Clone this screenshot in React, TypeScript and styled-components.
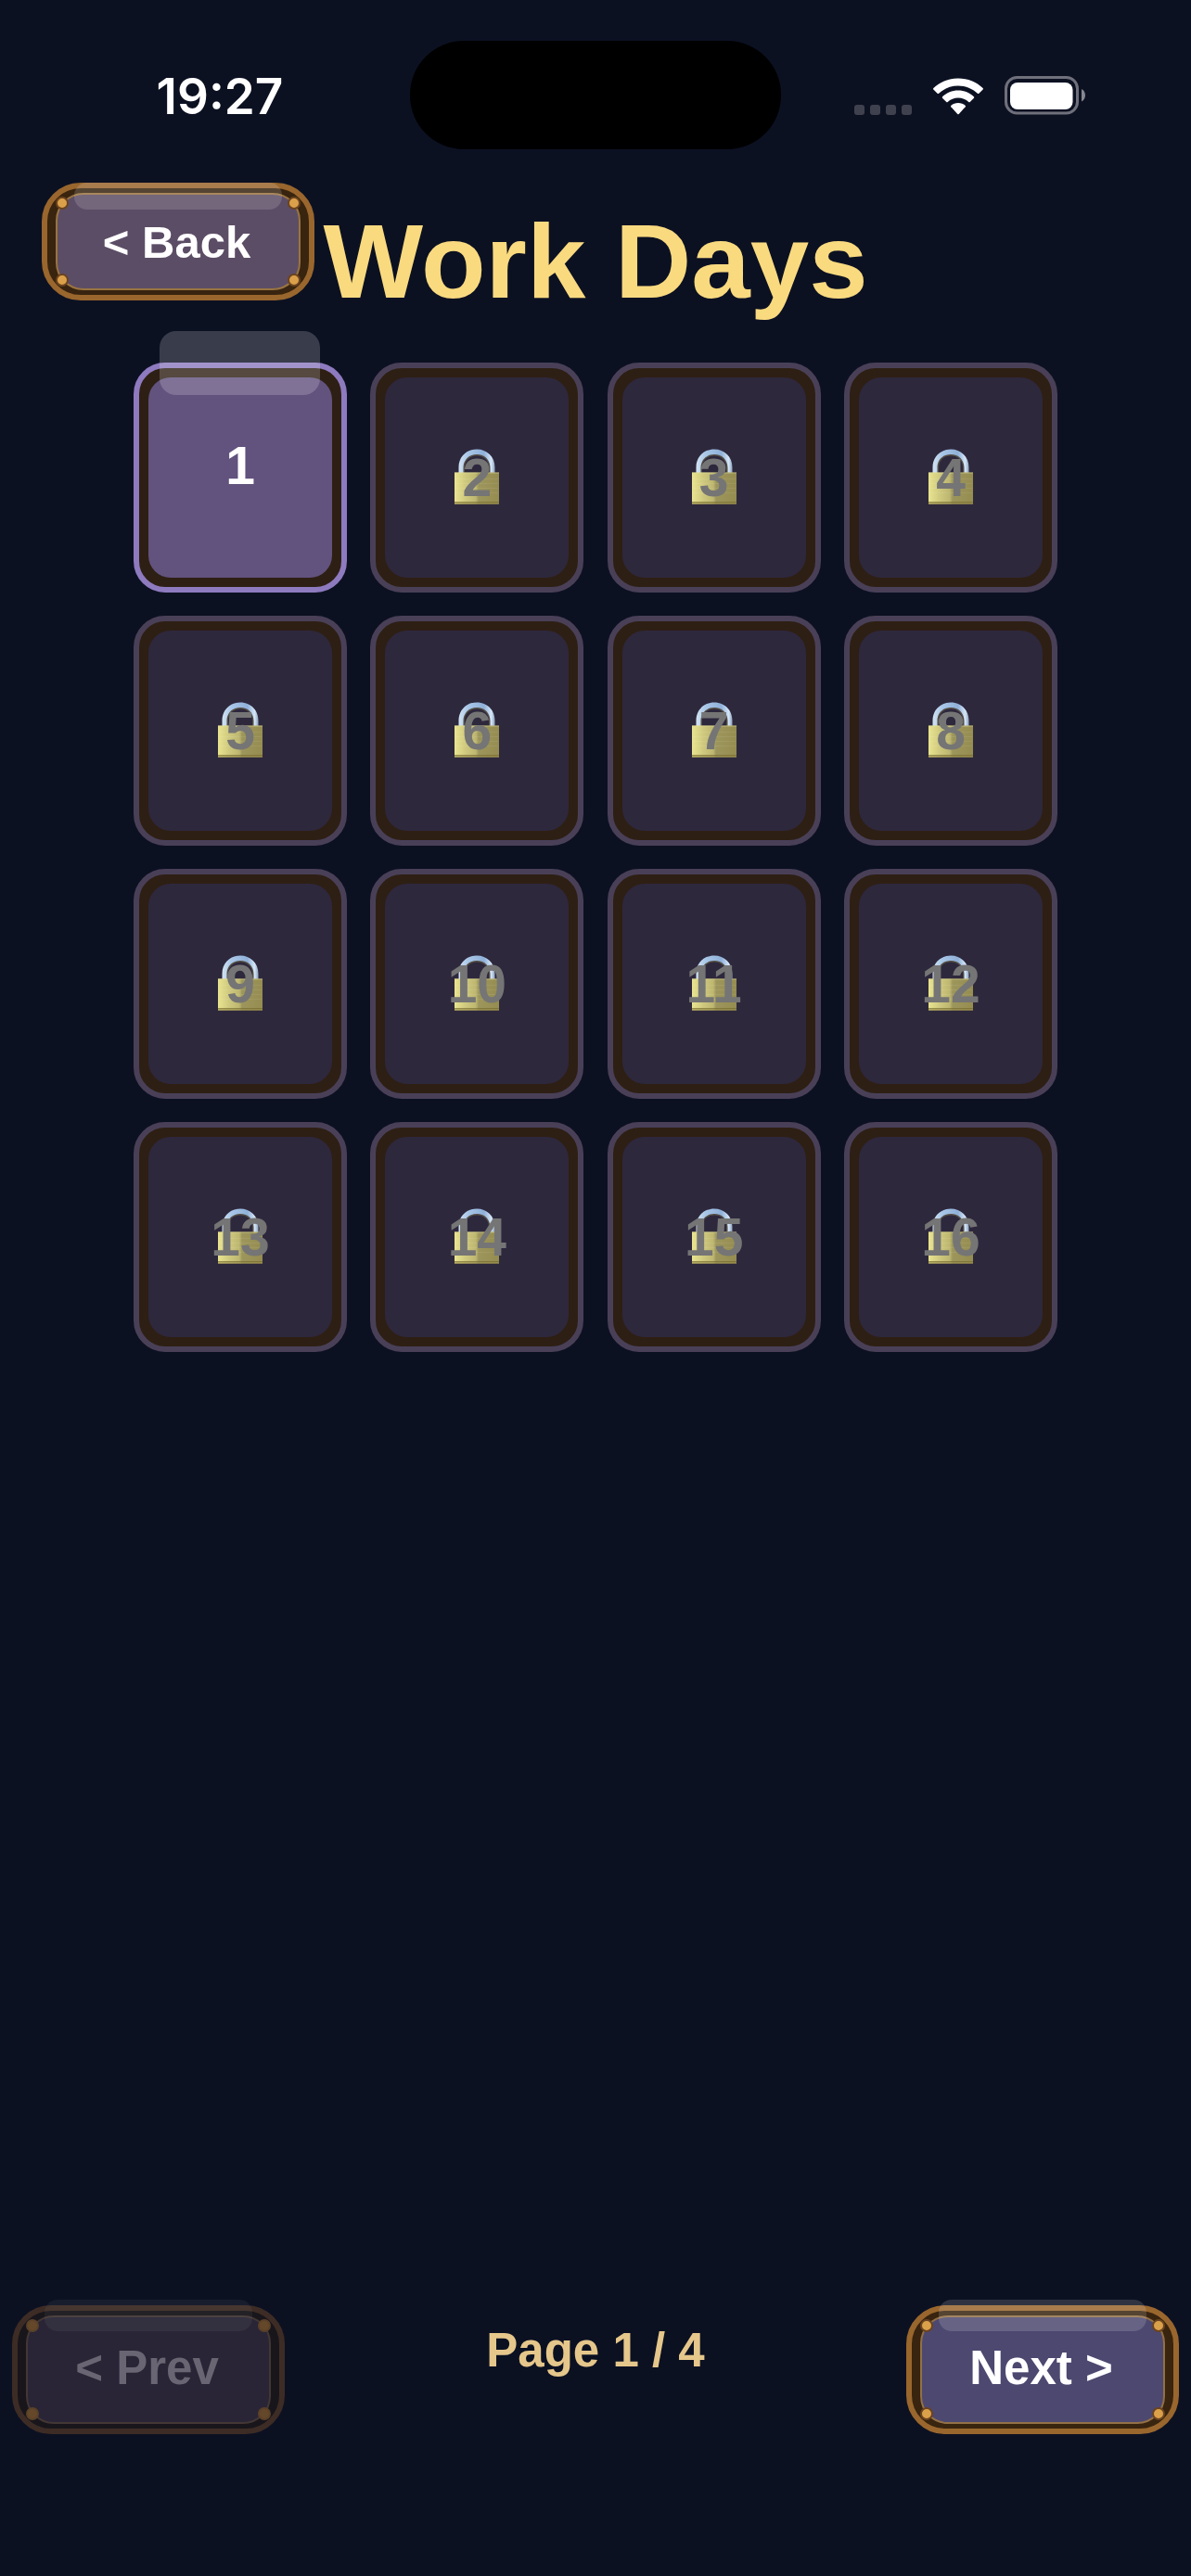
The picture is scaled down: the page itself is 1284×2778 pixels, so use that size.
import React, { FC, useState } from 'react'
import styled, { createGlobalStyle } from 'styled-components'

const GlobalStyle = createGlobalStyle`
  * {
    box-sizing: border-box;
  }
  body {
    margin: 0;
    background-color: #0c1122;
    font-family: 'Liberation Sans', Arial, sans-serif;
  }
  button {
    font-family: inherit;
  }
`

const Page = styled.div`
  display: flex;
  flex-direction: column;
  min-height: 100vh;
  background-color: #0c1122;
`

const StatusBar = styled.div`
  display: grid;
  grid-template-columns: 1fr 400px 1fr;
  align-items: center;
  justify-items: center;
  padding: 44px 32px 0;
`
const Clock = styled.time`
  padding-top: 2px;
  color: #fff;
  font-family: Inter, sans-serif;
  font-size: 53px;
  font-weight: 600;
  line-height: 60px;
`
const Island = styled.div`
  width: 400px;
  height: 117px;
  border-radius: 58px;
  background-color: #000;
`
const StatusIcons = styled.div`
  display: flex;
  align-items: flex-end;
  gap: 23px;
  padding-right: 2px;
`

const Header = styled.header`
  display: grid;
  grid-template-columns: 1fr auto 1fr;
  align-items: start;
  justify-items: start;
  margin-top: 36px;
  padding: 0 45px;
`
const Title = styled.h1`
  margin: 0;
  color: #fada7f;
  font-size: 114px;
  font-weight: 700;
  line-height: 170px;
  white-space: nowrap;
`

type Tone = 'plum' | 'indigo' | 'off'

const tones = {
  plum: {
    edge: '#99662d',
    frame: '#38240f',
    line: '#9a7441',
    face: '#5c4d66',
    text: '#fff',
    rivet: '#dba04a',
    ring: '#6b431f',
    gloss: 'rgba(255, 255, 255, 0.15)',
  },
  indigo: {
    edge: '#99662d',
    frame: '#38240f',
    line: '#937046',
    face: '#4d4870',
    text: '#fff',
    rivet: '#dba04a',
    ring: '#6b431f',
    gloss: 'rgba(255, 255, 255, 0.15)',
  },
  off: {
    edge: '#3d2c25',
    frame: '#18161b',
    line: '#433735',
    face: '#292536',
    text: '#696572',
    rivet: '#654829',
    ring: '#5b4129',
    gloss: 'rgba(255, 255, 255, 0.05)',
  },
}

const FrameButton = styled.button<{ $tone: Tone; $tall?: boolean }>`
  position: relative;
  display: flex;
  width: 294px;
  height: ${({ $tall }) => ($tall ? 139 : 127)}px;
  padding: 5px 9px;
  border: 6px solid ${({ $tone }) => tones[$tone].edge};
  border-radius: 42px;
  background-color: ${({ $tone }) => tones[$tone].frame};
  color: ${({ $tone }) => tones[$tone].text};
  font-size: ${({ $tall }) => ($tall ? 51 : 49)}px;
  font-weight: 700;
  cursor: pointer;

  &:disabled {
    cursor: default;
  }
`
const Face = styled.span<{ $tone: Tone; $tall?: boolean }>`
  flex: 1;
  align-self: stretch;
  display: flex;
  align-items: center;
  justify-content: center;
  padding-right: 3px;
  padding-bottom: ${({ $tall }) => ($tall ? 4 : 0)}px;
  border: 2px solid ${({ $tone }) => tones[$tone].line};
  border-radius: 30px;
  background-color: ${({ $tone }) => tones[$tone].face};
  white-space: nowrap;
`
const Gloss = styled.span<{ $tone: Tone; $tall?: boolean }>`
  position: absolute;
  top: ${({ $tall }) => ($tall ? -12 : -6)}px;
  left: 29px;
  right: 29px;
  height: ${({ $tall }) => ($tall ? 34 : 29)}px;
  border-radius: 14px;
  background-color: ${({ $tone }) => tones[$tone].gloss};
`
const Rivet = styled.span<{ $tone: Tone; $v: 'top' | 'bottom'; $h: 'left' | 'right' }>`
  position: absolute;
  ${({ $v }) => $v}: 9px;
  ${({ $h }) => $h}: 9px;
  width: 14px;
  height: 14px;
  border: 2px solid ${({ $tone }) => tones[$tone].ring};
  border-radius: 50%;
  background-color: ${({ $tone }) => tones[$tone].rivet};
`

const DayGrid = styled.main`
  display: grid;
  grid-template-columns: repeat(4, 230px);
  justify-content: space-between;
  row-gap: 25px;
  margin-top: 24px;
  padding: 0 144px;
`
const DayButton = styled.button<{ $open: boolean }>`
  position: relative;
  display: flex;
  height: 248px;
  padding: 10px;
  border: 6px solid ${({ $open }) => ($open ? '#8e7abf' : '#494058')};
  border-radius: 34px;
  background-color: #2e1f14;
  color: ${({ $open }) => ($open ? '#fff' : '#757575')};
  font-size: 57px;
  font-weight: 700;
  cursor: pointer;

  &:disabled {
    cursor: default;
  }
`
const DayFace = styled.span<{ $open: boolean }>`
  flex: 1;
  align-self: stretch;
  display: grid;
  place-items: center;
  place-content: center;
  padding-bottom: ${({ $open }) => ($open ? 26 : 0)}px;
  border-radius: 24px;
  background-color: ${({ $open }) => ($open ? '#62527e' : '#2e283d')};

  > * {
    grid-area: 1 / 1;
  }
`
const DayNumber = styled.span`
  z-index: 1;
  line-height: 64px;
`
const DayGloss = styled.span`
  position: absolute;
  top: -40px;
  left: 22px;
  right: 23px;
  height: 69px;
  border-radius: 18px;
  background-color: rgba(255, 255, 255, 0.19);
`
const Lock = styled.svg`
  width: 50px;
  height: 60px;
  margin-bottom: 3px;
`

const Footer = styled.footer`
  display: flex;
  align-items: flex-start;
  justify-content: space-between;
  margin-top: auto;
  padding: 0 13px 153px;
`
const PageLabel = styled.span`
  color: #e6c78b;
  font-size: 51px;
  font-weight: 700;
  line-height: 98px;
`

const SignalIcon: FC = () => (
  <svg width='62' height='11' viewBox='0 0 62 11' fill='#40414f' aria-hidden='true'>
    {[0, 17, 34, 51].map((x) => (
      <rect key={x} x={x} width='11' height='11' rx='3' />
    ))}
  </svg>
)

const WifiIcon: FC = () => (
  <svg width='54' height='40' viewBox='0 0 54 40' fill='#fff' aria-hidden='true'>
    <path d='M27 .5C16.600 .5 7.200 4.500 .4 11 -.1 11.500 -.1 12 .3 12.500L4.600 16.800C5 17.200 5.600 17.200 6.100 16.800 11.600 11.600 18.900 8.500 27 8.500S42.400 11.600 47.900 16.800C48.400 17.200 49 17.200 49.400 16.800L53.700 12.500C54.100 12 54.100 11.500 53.600 11 46.800 4.500 37.400 .5 27 .5Z' />
    <path d='M27 13.500C20.400 13.500 14.500 16 10.100 20.200 9.600 20.700 9.600 21.200 10 21.700L14.300 26C14.700 26.400 15.200 26.400 15.700 26 18.700 23.200 22.600 21.500 27 21.500S35.300 23.200 38.300 26C38.800 26.400 39.300 26.400 39.700 26L44 21.700C44.400 21.200 44.400 20.700 43.900 20.200 39.500 16 33.600 13.500 27 13.500Z' />
    <path d='M27 27C23.900 27 21.500 28 19.400 29.700 18.900 30.200 18.900 30.700 19.300 31.200L26.300 38.900C26.700 39.300 27.300 39.300 27.700 38.900L34.700 31.200C35.100 30.700 35.100 30.200 34.600 29.700 32.500 28 30.100 27 27 27Z' />
  </svg>
)

const BatteryIcon: FC = () => (
  <svg width='88' height='42' viewBox='0 0 88 42' aria-hidden='true'>
    <rect x='1.500' y='1.500' width='77' height='38.500' rx='12' fill='none' stroke='#6f707b' strokeWidth='3' />
    <rect x='6' y='7' width='67.500' height='29' rx='8' fill='#fff' />
    <path d='M83 14C88.300 16.500 88.300 25 83 27.500Z' fill='#85868f' />
  </svg>
)

const LockIcon: FC = () => (
  <Lock viewBox='0 0 50 60' aria-hidden='true'>
    <defs>
      <linearGradient id='brass' x1='0' x2='1' y1='0' y2='0'>
        <stop offset='0' stopColor='#e9e48f' />
        <stop offset='0.25' stopColor='#cfc97f' />
        <stop offset='0.48' stopColor='#bdb670' />
        <stop offset='0.54' stopColor='#9d965c' />
        <stop offset='1' stopColor='#958c50' />
      </linearGradient>
      <linearGradient id='steel' x1='0' x2='1' y1='0' y2='0'>
        <stop offset='0' stopColor='#d3e4f2' />
        <stop offset='0.25' stopColor='#a9c7e8' />
        <stop offset='0.7' stopColor='#8fb0d8' />
        <stop offset='0.9' stopColor='#d5e6f8' />
        <stop offset='1' stopColor='#8fa5be' />
      </linearGradient>
    </defs>
    <path d='M11 26V20C11 12 17 6.500 25 6.500S39 12 39 20V26' fill='none' stroke='#544d43' strokeWidth='2' />
    <path d='M5.500 26V20C5.500 8.500 14 .5 25 .5S44.500 8.500 44.500 20V26H39.500V20.500C39.500 12 33.500 6 25 6S10.500 12 10.500 20.500V26Z' fill='url(#steel)' />
    <rect x='1' y='25.500' width='48' height='34' fill='url(#brass)' />
    <rect x='1' y='25.500' width='48' height='1' fill='#e8e3a0' opacity='0.5' />
    <path d='M2 32.500H48M2 37.500H48M2 42.500H48M2 47.500H48' stroke='#fff' strokeOpacity='0.07' />
    <rect x='1' y='57' width='48' height='1.500' fill='#75692f' opacity='0.7' />
    <rect x='1' y='58.500' width='48' height='1' fill='#a69b4e' opacity='0.8' />
  </Lock>
)

interface GameButtonProps {
  label: string
  tone: Tone
  tall?: boolean
  disabled?: boolean
  onClick?: () => void
}

const GameButton: FC<GameButtonProps> = ({ label, tone, tall, disabled, onClick }) => (
  <FrameButton type='button' $tone={tone} $tall={tall} disabled={disabled} onClick={onClick}>
    <Face $tone={tone} $tall={tall}>
      {label}
    </Face>
    <Rivet $tone={tone} $v='top' $h='left' />
    <Rivet $tone={tone} $v='top' $h='right' />
    <Rivet $tone={tone} $v='bottom' $h='left' />
    <Rivet $tone={tone} $v='bottom' $h='right' />
    <Gloss $tone={tone} $tall={tall} />
  </FrameButton>
)

const PER_PAGE = 16
const PAGES = 4
const UNLOCKED = 1

const App: FC = () => {
  const [page, setPage] = useState(1)
  const days = Array.from({ length: PER_PAGE }, (_, i) => (page - 1) * PER_PAGE + i + 1)

  return (
    <>
      <GlobalStyle />
      <Page>
        <StatusBar>
          <Clock>19:27</Clock>
          <Island />
          <StatusIcons>
            <SignalIcon />
            <WifiIcon />
            <BatteryIcon />
          </StatusIcons>
        </StatusBar>
        <Header>
          <GameButton label='< Back' tone='plum' />
          <Title>Work Days</Title>
        </Header>
        <DayGrid>
          {days.map((day) => {
            const open = day <= UNLOCKED
            return (
              <DayButton key={day} type='button' $open={open} disabled={!open}>
                <DayFace $open={open}>
                  {!open && <LockIcon />}
                  <DayNumber>{day}</DayNumber>
                </DayFace>
                {open && <DayGloss />}
              </DayButton>
            )
          })}
        </DayGrid>
        <Footer>
          <GameButton
            label='< Prev'
            tone={page === 1 ? 'off' : 'indigo'}
            tall
            disabled={page === 1}
            onClick={() => setPage(page - 1)}
          />
          <PageLabel>
            Page {page} / {PAGES}
          </PageLabel>
          <GameButton
            label='Next >'
            tone={page === PAGES ? 'off' : 'indigo'}
            tall
            disabled={page === PAGES}
            onClick={() => setPage(page + 1)}
          />
        </Footer>
      </Page>
    </>
  )
}

export default App
